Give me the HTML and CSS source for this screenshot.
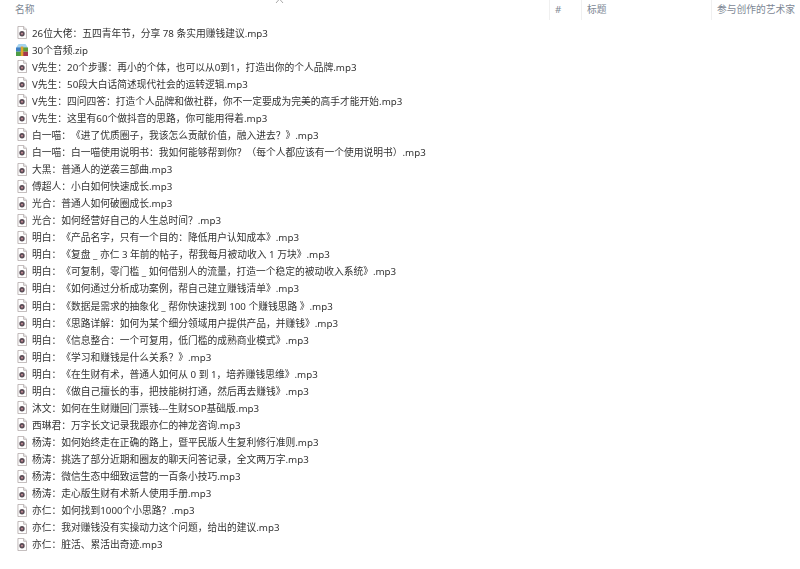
FILE: index.html
```html
<!DOCTYPE html>
<html lang="zh-CN">
<head>
    <meta charset="UTF-8">
    <title>名称</title>
    <link rel="stylesheet" href="styles.css">
</head>
<body>
    <svg class="defs" width="0" height="0">
        <symbol id="audio" viewBox="0 0 12 16">
            <path d="M1 .5h7l3.500 3.500v11.500h-10.500z" fill="#fff" stroke="#b0a8a8"/>
            <path d="M8 .5v3.500h3.500" fill="#eee" stroke="#b0a8a8"/>
            <circle cx="6" cy="9.500" r="3.300" fill="#5a4c55"/>
            <circle cx="6" cy="9.500" r="1.200" fill="#c98f9a"/>
        </symbol>
        <symbol id="zip" viewBox="0 0 14 14">
            <path d="M1 3l2-3h8l2 3v2h-12z" fill="#a5d3ef"/>
            <rect y="4" width="6" height="5" fill="#3f7fc4"/>
            <rect y="9" width="6" height="5" fill="#4d9c45"/>
            <rect x="8" y="4" width="6" height="5" fill="#5f9e3a"/>
            <rect x="8" y="9" width="6" height="5" fill="#a5384f"/>
            <rect x="5.500" y="3" width="3" height="11" fill="#e3a52e"/>
        </symbol>
    </svg>

    <div class="list-header">
        <div class="col col-name">名称</div>
        <div class="col col-num">#</div>
        <div class="col col-title">标题</div>
        <div class="col col-artist">参与创作的艺术家</div>
        <svg class="sort-caret" width="9" height="4" viewBox="0 0 9 4"><path d="M1 4l3.500-4 3.500 4" fill="none" stroke="#a9a9a9"/></svg>
    </div>

    <ul class="file-list">
        <li class="file-row"><svg class="file-icon"><use href="#audio"/></svg>26位大佬：五四青年节，分享 78 条实用赚钱建议.mp3</li>
        <li class="file-row"><svg class="file-icon zip-icon"><use href="#zip"/></svg>30个音频.zip</li>
        <li class="file-row"><svg class="file-icon"><use href="#audio"/></svg>V先生：20个步骤：再小的个体，也可以从0到1，打造出你的个人品牌.mp3</li>
        <li class="file-row"><svg class="file-icon"><use href="#audio"/></svg>V先生：50段大白话简述现代社会的运转逻辑.mp3</li>
        <li class="file-row"><svg class="file-icon"><use href="#audio"/></svg>V先生：四问四答：打造个人品牌和做社群，你不一定要成为完美的高手才能开始.mp3</li>
        <li class="file-row"><svg class="file-icon"><use href="#audio"/></svg>V先生：这里有60个做抖音的思路，你可能用得着.mp3</li>
        <li class="file-row"><svg class="file-icon"><use href="#audio"/></svg>白一喵：《进了优质圈子，我该怎么贡献价值，融入进去？》.mp3</li>
        <li class="file-row"><svg class="file-icon"><use href="#audio"/></svg>白一喵：白一喵使用说明书：我如何能够帮到你？（每个人都应该有一个使用说明书）.mp3</li>
        <li class="file-row"><svg class="file-icon"><use href="#audio"/></svg>大黑：普通人的逆袭三部曲.mp3</li>
        <li class="file-row"><svg class="file-icon"><use href="#audio"/></svg>傅超人：小白如何快速成长.mp3</li>
        <li class="file-row"><svg class="file-icon"><use href="#audio"/></svg>光合：普通人如何破圈成长.mp3</li>
        <li class="file-row"><svg class="file-icon"><use href="#audio"/></svg>光合：如何经营好自己的人生总时间？.mp3</li>
        <li class="file-row"><svg class="file-icon"><use href="#audio"/></svg>明白：《产品名字，只有一个目的：降低用户认知成本》.mp3</li>
        <li class="file-row"><svg class="file-icon"><use href="#audio"/></svg>明白：《复盘 _ 亦仁 3 年前的帖子，帮我每月被动收入 1 万块》.mp3</li>
        <li class="file-row"><svg class="file-icon"><use href="#audio"/></svg>明白：《可复制，零门槛 _ 如何借别人的流量，打造一个稳定的被动收入系统》.mp3</li>
        <li class="file-row"><svg class="file-icon"><use href="#audio"/></svg>明白：《如何通过分析成功案例，帮自己建立赚钱清单》.mp3</li>
        <li class="file-row"><svg class="file-icon"><use href="#audio"/></svg>明白：《数据是需求的抽象化 _ 帮你快速找到 100 个赚钱思路 》.mp3</li>
        <li class="file-row"><svg class="file-icon"><use href="#audio"/></svg>明白：《思路详解：如何为某个细分领域用户提供产品，并赚钱》.mp3</li>
        <li class="file-row"><svg class="file-icon"><use href="#audio"/></svg>明白：《信息整合：一个可复用，低门槛的成熟商业模式》.mp3</li>
        <li class="file-row"><svg class="file-icon"><use href="#audio"/></svg>明白：《学习和赚钱是什么关系？》.mp3</li>
        <li class="file-row"><svg class="file-icon"><use href="#audio"/></svg>明白：《在生财有术，普通人如何从 0 到 1，培养赚钱思维》.mp3</li>
        <li class="file-row"><svg class="file-icon"><use href="#audio"/></svg>明白：《做自己擅长的事，把技能树打通，然后再去赚钱》.mp3</li>
        <li class="file-row"><svg class="file-icon"><use href="#audio"/></svg>沐文：如何在生财赚回门票钱---生财SOP基础版.mp3</li>
        <li class="file-row"><svg class="file-icon"><use href="#audio"/></svg>西琳君：万字长文记录我跟亦仁的神龙咨询.mp3</li>
        <li class="file-row"><svg class="file-icon"><use href="#audio"/></svg>杨涛：如何始终走在正确的路上，暨平民版人生复利修行准则.mp3</li>
        <li class="file-row"><svg class="file-icon"><use href="#audio"/></svg>杨涛：挑选了部分近期和圈友的聊天问答记录，全文两万字.mp3</li>
        <li class="file-row"><svg class="file-icon"><use href="#audio"/></svg>杨涛：微信生态中细致运营的一百条小技巧.mp3</li>
        <li class="file-row"><svg class="file-icon"><use href="#audio"/></svg>杨涛：走心版生财有术新人使用手册.mp3</li>
        <li class="file-row"><svg class="file-icon"><use href="#audio"/></svg>亦仁：如何找到1000个小思路？.mp3</li>
        <li class="file-row"><svg class="file-icon"><use href="#audio"/></svg>亦仁：我对赚钱没有实操动力这个问题，给出的建议.mp3</li>
        <li class="file-row"><svg class="file-icon"><use href="#audio"/></svg>亦仁：脏活、累活出奇迹.mp3</li>
    </ul>
</body>
</html>
```

FILE: styles.css
```css
* {
    margin: 0;
    padding: 0;
    box-sizing: border-box;
}
body {
    font-family: "Noto Sans", "Noto Sans CJK SC", sans-serif;
    font-size: 9.75px;
    font-variant-ligatures: none;
    text-spacing-trim: space-all;
    color: #333;
    background-color: #fff;
    overflow: hidden;
}
.defs {
    display: block;
    height: 0;
}

/* column headers */
.list-header {
    position: relative;
    display: grid;
    grid-template-columns: 549px 32px 130px 89px;
    height: 20px;
    color: #7d8794;
    line-height: 20px;
}
.col {
    padding-left: 5px;
    border-left: 1px solid #f0f0f0;
}
.col-name {
    padding-left: 15px;
    border-left: none;
}
.sort-caret {
    position: absolute;
    top: -1px;
    left: 275px;
}

/* files */
.file-list {
    list-style-type: none;
    padding-top: 4px;
}
.file-row {
    display: flex;
    align-items: center;
    height: 17.07px;
    padding-left: 17px;
    white-space: nowrap;
    filter: blur(0.3px);
}
.file-icon {
    width: 10px;
    height: 13px;
    margin-right: 5px;
    flex-shrink: 0;
}
.zip-icon {
    width: 12px;
    height: 12px;
    margin-left: -1px;
    margin-right: 4px;
}
```
